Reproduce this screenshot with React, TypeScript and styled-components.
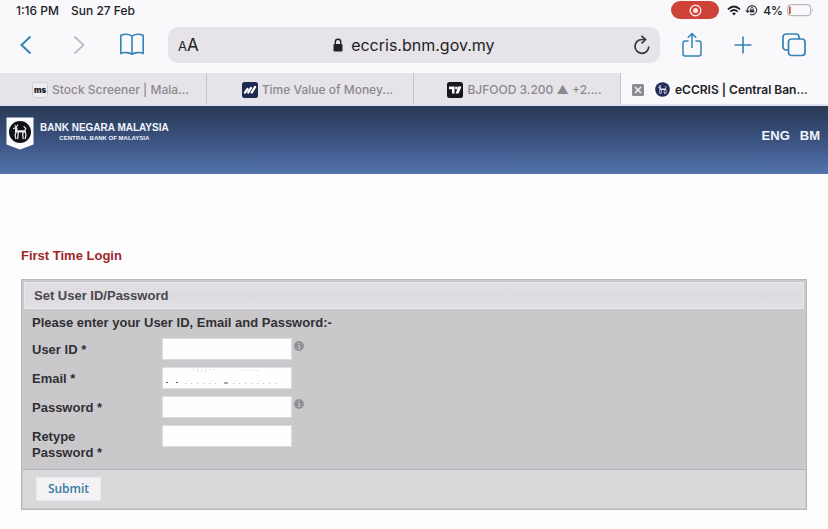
import React from 'react';
import styled, { createGlobalStyle } from 'styled-components';

const Global = createGlobalStyle`
  * { box-sizing: border-box; }
  body { margin: 0; background: #fdfdfd; font-family: "Liberation Sans", Arial, sans-serif; }
  button { font: inherit; border: 0; padding: 0; background: none; cursor: pointer; }
  svg { display: block; flex: none; }
`;

const Chrome = styled.div`
  background: #f9f8fb;
  color: #222226;
  font-family: Inter, sans-serif;
`;

const StatusBar = styled.div`
  display: flex;
  align-items: center;
  height: 20px;
  padding: 0 14px 0 16px;
  gap: 12px;
  font-size: 12px;
  font-weight: 500;
`;

const StatusIcons = styled.div`
  display: flex;
  align-items: center;
  gap: 4px;
  margin-left: auto;
`;

const RecordPill = styled.button`
  display: flex;
  align-items: center;
  justify-content: center;
  width: 48px;
  height: 18px;
  margin-right: 4px;
  border-radius: 9px;
  background: #cf4238;
`;

const Toolbar = styled.div`
  display: flex;
  align-items: center;
  height: 53px;
  padding: 0 21px 4px 13px;
`;

const ToolGroup = styled.div<{ $gap: number }>`
  display: flex;
  align-items: center;
  gap: ${(p) => p.$gap}px;
`;

const IconButton = styled.button`
  display: flex;
  align-items: center;
  justify-content: center;
  width: 26px;
  height: 30px;
  color: #3583b4;
  &:disabled { color: #bcbbc1; }
`;

const AddressBar = styled.div`
  display: flex;
  align-items: center;
  flex: 1;
  height: 36px;
  margin: 0 19px 0 23px;
  padding: 0 5px 0 10px;
  border-radius: 10px;
  background: #e6e4e8;
`;

const TextSize = styled.button`
  display: flex;
  align-items: baseline;
  font-size: 17px;
  color: #222226;
`;

const SmallA = styled.span`
  font-size: 13px;
`;

const Address = styled.div`
  display: flex;
  flex: 1;
  align-items: center;
  justify-content: center;
  gap: 8px;
  font-size: 16px;
`;

const Tabs = styled.nav`
  display: grid;
  grid-template-columns: repeat(4, 1fr);
  height: 33px;
  border-bottom: 2px solid #e2e3f3;
`;

const Tab = styled.a<{ $active?: boolean }>`
  display: flex;
  align-items: center;
  justify-content: ${(p) => (p.$active ? 'flex-start' : 'center')};
  gap: ${(p) => (p.$active ? 5 : 4)}px;
  padding: ${(p) => (p.$active ? '2px 0 0 34px' : '2px 0 0 15px')};
  position: relative;
  border-right: ${(p) => (p.$active ? '0' : '1px solid #c6c4c9')};
  background: ${(p) => (p.$active ? '#f9f8fb' : '#e6e4e8')};
  color: ${(p) => (p.$active ? '#222226' : '#8b8a8f')};
  font-size: 12px;
  font-weight: ${(p) => (p.$active ? 600 : 500)};
  text-decoration: none;
  white-space: nowrap;
`;

const CloseTab = styled.span`
  position: absolute;
  left: 11px;
  top: 11px;
`;

const Banner = styled.header`
  display: flex;
  align-items: flex-start;
  justify-content: space-between;
  height: 68px;
  padding: 11px 8px 0 6px;
  background: linear-gradient(#2a3a55, #3a527f 50%, #5373ad);
  color: #f1f5fb;
`;

const Brand = styled.div`
  display: flex;
  gap: 6px;
`;

const BrandText = styled.div`
  display: flex;
  flex-direction: column;
  align-items: center;
  padding-top: 5px;
`;

const BrandName = styled.div`
  font-size: 10px;
  line-height: 12px;
  font-weight: 700;
`;

const BrandSub = styled.div`
  font-size: 6px;
  line-height: 8px;
  font-weight: 700;
`;

const Languages = styled.nav`
  display: flex;
  gap: 10px;
  padding-top: 11px;
`;

const Language = styled.a`
  color: inherit;
  font-size: 13px;
  line-height: 16px;
  font-weight: 700;
  text-decoration: none;
`;

const Content = styled.main`
  padding: 74px 21px 16px;
  color: #303034;
  font-size: 13px;
  line-height: 16px;
  font-weight: 700;
`;

const Title = styled.h1`
  margin: 0 0 15px;
  color: #a0262b;
  font-size: 13px;
  line-height: 16px;
`;

const Panel = styled.form`
  border: 1px solid #bbb6bd;
  background: #cac8cb;
`;

const PanelHeading = styled.h2`
  margin: 2px 2px 0;
  padding: 5px 9px 4px;
  border: 1px solid #e9e7eb;
  background: linear-gradient(#e3e0e5, #dddbdf 50%, #e2e0e4);
  color: #48484d;
  font-size: 13px;
  line-height: 16px;
`;

const Fields = styled.div`
  padding: 6px 10px 8px;
`;

const Intro = styled.p`
  margin: 0 0 7px;
`;

const Row = styled.div`
  display: grid;
  grid-template-columns: 130px 130px auto;
  align-items: start;
  min-height: 29px;
`;

const Label = styled.label`
  padding-top: 4px;
  width: 84px;
`;

const Field = styled.div`
  position: relative;
`;

const Input = styled.input`
  display: block;
  width: 100%;
  height: 22px;
  padding: 0 4px;
  border: 1px solid #dedce0;
  background: #fefefe;
  font: inherit;
  font-weight: 400;
`;

const Residue = styled.svg`
  position: absolute;
  left: 3px;
  top: 1px;
  pointer-events: none;
`;

const Hint = styled.button`
  justify-self: start;
  margin: 3px 0 0 2px;
`;

const Footer = styled.div`
  margin: 0 1px 1px;
  padding: 7px 13px 7px;
  border-top: 1px solid #b3b0b5;
  background: #dad8db;
`;

const Submit = styled.button`
  display: block;
  height: 24px;
  width: 65px;
  border: 1px solid #e9e7eb;
  background: #f4f2f5;
  color: #397ca3;
  font-family: "Open Sans", sans-serif;
  font-size: 12px;
  font-weight: 600;
`;

const InfoIcon = () => (
  <svg width="10" height="10" viewBox="0 0 10 10">
    <circle cx="5" cy="5" r="4.9" fill="#929094" />
    <path d="M4 4.5h1.5v2.8M3.9 7.4h2.4M4.4 2.6h1.2" stroke="#cac8cb" strokeWidth="1" fill="none" />
  </svg>
);

const Deer = ({ color }: { color: string }) => (
  <g fill="none" stroke={color} strokeLinecap="round" strokeLinejoin="round">
    <path d="M8.2 8.2v3.2h8.300" strokeWidth="2.400" />
    <path d="M8 7.500L5.500 8.500M7 5.500L8.200 7l1.600-2M16.500 11l1.300-2.600-1.800-1.800" strokeWidth="1.200" />
    <path d="M8 12l-.8 3 .6 3.500M10.300 12.500l-.6 6M15.200 12l-.6 3 .6 3.500M17.300 11.500l.6 3.500-.6 3.500" strokeWidth="1.300" />
  </g>
);

const App = () => (
  <>
    <Global />
    <Chrome>
      <StatusBar>
        <span>1:16 PM</span>
        <span>Sun 27 Feb</span>
        <StatusIcons>
          <RecordPill type="button" aria-label="Recording">
            <svg width="13" height="13" viewBox="0 0 13 13">
              <circle cx="6.5" cy="6.5" r="5.3" fill="none" stroke="#fbe3e1" strokeWidth="1.4" />
              <circle cx="6.5" cy="6.5" r="2.5" fill="#fbe3e1" />
            </svg>
          </RecordPill>
          <svg width="14" height="11" viewBox="0 0 15 11">
            <path d="M1 4.2Q7.5-1.8 14 4.2M3.5 6.7q4-3.5 8 0" fill="none" stroke="#222226" strokeWidth="1.9" />
            <path d="M5.4 8.5q2.1-1.7 4.2 0L7.5 10.8z" fill="#222226" />
          </svg>
          <svg width="14" height="12" viewBox="0 0 14 12">
            <path d="M2.7 7.7A4.600 4.600 0 1 1 5 10.300M.8 6.200l1.700 2 1.900-1.500" fill="none" stroke="#34343a" strokeWidth="1.100" />
            <rect x="4.800" y="5.400" width="4.400" height="3" rx=".5" fill="#34343a" />
            <path d="M5.700 5.700v-1a1.300 1.300 0 0 1 2.600 0v1" fill="none" stroke="#34343a" strokeWidth=".9" />
          </svg>
          <span>4%</span>
          <svg width="27" height="13" viewBox="0 0 27 13">
            <rect x=".7" y=".7" width="23" height="11" rx="3" fill="none" stroke="#a9a8ad" />
            <path d="M25.4 4.5q1.4 1.7 0 3.4z" fill="#a9a8ad" />
            <rect x="2" y="2.3" width="1.7" height="8" rx=".8" fill="#cf4a38" />
          </svg>
        </StatusIcons>
      </StatusBar>

      <Toolbar>
        <ToolGroup $gap={27}>
          <IconButton type="button" aria-label="Back">
            <svg width="14" height="20" viewBox="0 0 14 20"><path d="M11.5 1.5L2.5 10l9 8.5" fill="none" stroke="currentColor" strokeWidth="2" /></svg>
          </IconButton>
          <IconButton type="button" aria-label="Forward" disabled>
            <svg width="14" height="20" viewBox="0 0 14 20"><path d="M2.5 1.5l9 8.5-9 8.5" fill="none" stroke="currentColor" strokeWidth="1.8" /></svg>
          </IconButton>
          <IconButton type="button" aria-label="Bookmarks">
            <svg width="26" height="23" viewBox="0 0 26 23">
              <path d="M13 3.2C10.5.8 4.5.6 1.8 2.5v18c3-1.4 8.5-1.3 11.2.8 2.7-2.1 8.2-2.2 11.2-.8v-18C21.5.6 15.500.8 13 3.2zV21" fill="none" stroke="currentColor" strokeWidth="1.6" strokeLinejoin="round" />
            </svg>
          </IconButton>
        </ToolGroup>
        <AddressBar>
          <TextSize type="button" aria-label="Text size"><SmallA>A</SmallA>A</TextSize>
          <Address>
            <svg width="10" height="14" viewBox="0 0 10 14">
              <rect x=".5" y="6" width="9" height="7.5" rx="1" fill="#222226" />
              <path d="M2.3 6.5V4a2.7 2.7 0 0 1 5.4 0v2.5" fill="none" stroke="#222226" strokeWidth="1.4" />
            </svg>
            <span>eccris.bnm.gov.my</span>
          </Address>
          <IconButton type="button" aria-label="Reload">
            <svg width="18" height="20" viewBox="0 0 18 20">
              <path d="M15.8 11.5A6.9 6.9 0 1 1 9 4.5h3" fill="none" stroke="#34343a" strokeWidth="1.7" />
              <path d="M8.5.8L12.500 4.5 8.5 8.3" fill="none" stroke="#34343a" strokeWidth="1.7" />
            </svg>
          </IconButton>
        </AddressBar>
        <ToolGroup $gap={25}>
          <IconButton type="button" aria-label="Share">
            <svg width="22" height="26" viewBox="0 0 22 26">
              <path d="M7.5 9H4a2 2 0 0 0-2 2v11a2 2 0 0 0 2 2h14a2 2 0 0 0 2-2V11a2 2 0 0 0-2-2h-3.5M11 16V2M6.8 5.8L11 1.6l4.200 4.200" fill="none" stroke="currentColor" strokeWidth="1.5" />
            </svg>
          </IconButton>
          <IconButton type="button" aria-label="New tab">
            <svg width="20" height="20" viewBox="0 0 20 20"><path d="M10 1.500v17M1.500 10h17" stroke="currentColor" strokeWidth="1.6" /></svg>
          </IconButton>
          <IconButton type="button" aria-label="All tabs">
            <svg width="24" height="24" viewBox="0 0 24 24">
              <path d="M6.5 17H4a3 3 0 0 1-3-3V4a3 3 0 0 1 3-3h10a3 3 0 0 1 3 3v2" fill="none" stroke="currentColor" strokeWidth="1.7" />
              <rect x="6.5" y="6" width="16.5" height="16.5" rx="3" fill="none" stroke="currentColor" strokeWidth="1.7" />
            </svg>
          </IconButton>
        </ToolGroup>
      </Toolbar>

      <Tabs>
        <Tab href="#stocks">
          <svg width="16" height="16" viewBox="0 0 16 16">
            <rect x=".5" y=".5" width="15" height="15" rx="2" fill="#efedf0" stroke="#cfcdd2" />
            <text x="8" y="11" textAnchor="middle" fontFamily="Inter, sans-serif" fontSize="8" fontWeight="900" fill="#222226">ms</text>
          </svg>
          <span>Stock Screener | Mala...</span>
        </Tab>
        <Tab href="#money">
          <svg width="16" height="16" viewBox="0 0 16 16">
            <rect width="16" height="16" rx="2.5" fill="#1c2950" />
            <path d="M3 10.5l2.500-3.500M6.300 10.500L9 6M9.800 10.500L13 5" fill="none" stroke="#fff" strokeWidth="2.300" strokeLinecap="round" />
          </svg>
          <span>Time Value of Money...</span>
        </Tab>
        <Tab href="#bjfood">
          <svg width="16" height="16" viewBox="0 0 16 16">
            <rect width="16" height="16" rx="2.5" fill="#17181e" />
            <path d="M2 4.500h5.500v7H5V7.300H2zM11.200 4.500H14.500L11.600 11.500H8.600z" fill="#fff" />
            <circle cx="9.3" cy="5.900" r="1.300" fill="#fff" />
          </svg>
          <span>BJFOOD 3.200 ▲ +2....</span>
        </Tab>
        <Tab href="#eccris" $active>
          <CloseTab>
            <svg width="12" height="12" viewBox="0 0 12 12">
              <rect width="12" height="12" rx="1.5" fill="#8c8b90" />
              <path d="M3 3l6 6M9 3l-6 6" stroke="#f9f8fb" strokeWidth="1.3" />
            </svg>
          </CloseTab>
          <svg width="15" height="15" viewBox="0 0 24 24">
            <circle cx="12" cy="12" r="11.7" fill="#202a58" />
            <Deer color="#dfe2ee" />
          </svg>
          <span>eCCRIS | Central Ban...</span>
        </Tab>
      </Tabs>
    </Chrome>

    <Banner>
      <Brand>
        <svg width="28" height="33" viewBox="0 0 28 33">
          <path d="M.5.5h27v27L14 32.500.5 27.500z" fill="#fbfcfe" />
          <circle cx="14" cy="15" r="11" fill="#101216" />
          <g transform="translate(2 3)"><Deer color="#e9eaec" /></g>
        </svg>
        <BrandText>
          <BrandName>BANK NEGARA MALAYSIA</BrandName>
          <BrandSub>CENTRAL BANK OF MALAYSIA</BrandSub>
        </BrandText>
      </Brand>
      <Languages>
        <Language href="#eng">ENG</Language>
        <Language href="#bm">BM</Language>
      </Languages>
    </Banner>

    <Content>
      <Title>First Time Login</Title>
      <Panel>
        <PanelHeading>Set User ID/Password</PanelHeading>
        <Fields>
          <Intro>Please enter your User ID, Email and Password:-</Intro>
          <Row>
            <Label htmlFor="user">User ID *</Label>
            <Field><Input id="user" /></Field>
            <Hint type="button" aria-label="User ID help"><InfoIcon /></Hint>
          </Row>
          <Row>
            <Label htmlFor="email">Email *</Label>
            <Field>
              <Input id="email" type="email" />
              <Residue width="124" height="17" viewBox="0 0 124 17">
                <path d="M1 14.5h2M11 14.5h2M59 15h4" stroke="#55555a" />
                <path d="M20 15.5h36M68 15.5h48" stroke="#bbb" strokeDasharray="1 5" />
                <path d="M28 1.5h22M32 3.5h12M76 2.5h18" stroke="#ccc" strokeDasharray="1 3" />
              </Residue>
            </Field>
          </Row>
          <Row>
            <Label htmlFor="password">Password *</Label>
            <Field><Input id="password" type="password" /></Field>
            <Hint type="button" aria-label="Password help"><InfoIcon /></Hint>
          </Row>
          <Row>
            <Label htmlFor="retype">Retype Password *</Label>
            <Field><Input id="retype" type="password" /></Field>
          </Row>
        </Fields>
        <Footer><Submit type="button">Submit</Submit></Footer>
      </Panel>
    </Content>
  </>
);

export default App;
